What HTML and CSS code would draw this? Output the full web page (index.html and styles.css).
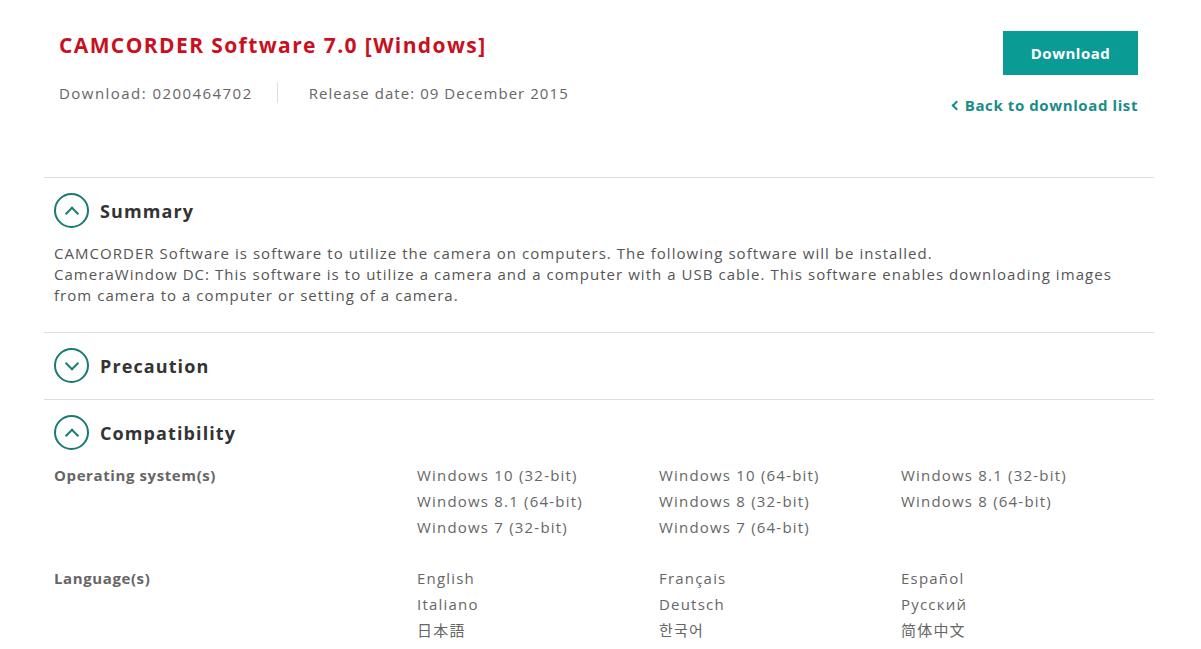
FILE: index.html
```html
<!DOCTYPE html>
<html lang="en">
<head>
    <meta charset="UTF-8">
    <title>CAMCORDER Software 7.0 [Windows]</title>
    <link rel="stylesheet" href="styles.css">
</head>
<body>
    <div class="page">
        <div class="head">
            <div class="head-info">
                <h1 class="title">CAMCORDER Software 7.0 [Windows]</h1>
                <div class="meta">
                    <span class="num">Download: 0200464702</span>
                    <span class="sep"></span>
                    <span>Release date: 09 December 2015</span>
                </div>
            </div>
            <div class="head-actions">
                <a class="btn" href="#">Download</a>
                <a class="back" href="#"><span class="back-arrow"></span>Back to download list</a>
            </div>
        </div>

        <!-- 概要 -->
        <div class="section">
            <div class="section-head">
                <span class="toggle up"></span>
                <h2>Summary</h2>
            </div>
            <p class="summary">CAMCORDER Software is software to utilize the camera on computers. The following software will be installed.<br>CameraWindow DC: This software is to utilize a camera and a computer with a USB cable. This software enables downloading images from camera to a computer or setting of a camera.</p>
        </div>

        <div class="section">
            <div class="section-head">
                <span class="toggle down"></span>
                <h2>Precaution</h2>
            </div>
        </div>

        <div class="section last">
            <div class="section-head">
                <span class="toggle up"></span>
                <h2>Compatibility</h2>
            </div>
            <div class="compat">
                <div class="compat-label">Operating system(s)</div>
                <ul class="compat-list">
                    <li>Windows 10 (32-bit)</li>
                    <li>Windows 10 (64-bit)</li>
                    <li>Windows 8.1 (32-bit)</li>
                    <li>Windows 8.1 (64-bit)</li>
                    <li>Windows 8 (32-bit)</li>
                    <li>Windows 8 (64-bit)</li>
                    <li>Windows 7 (32-bit)</li>
                    <li>Windows 7 (64-bit)</li>
                </ul>
            </div>
            <div class="compat">
                <div class="compat-label">Language(s)</div>
                <ul class="compat-list">
                    <li>English</li>
                    <li>Français</li>
                    <li>Español</li>
                    <li>Italiano</li>
                    <li>Deutsch</li>
                    <li>Русский</li>
                    <li lang="ja">日本語</li>
                    <li lang="ko">한국어</li>
                    <li lang="zh-CN">简体中文</li>
                </ul>
            </div>
        </div>
    </div>
</body>
</html>
```

FILE: styles.css
```css
*{
    padding: 0;
    margin: 0;
    box-sizing: border-box;
}
body{
    font-family: "Open Sans", "Noto Sans CJK JP", sans-serif;
    color: #555;
    background: #fff;
}
.page{
    width: 1110px;
    margin-left: 44px;
}
/* 顶部标题区 */
.head{
    display: flex;
    justify-content: space-between;
    padding: 31px 16px 0 15px;
    height: 178px;
    border-bottom: 1px solid #ddd;
}
.title{
    font-size: 21px;
    font-weight: 700;
    color: #c8101e;
    letter-spacing: 1.4px;
    line-height: 28px;
}
.meta{
    display: flex;
    align-items: center;
    margin-top: 23px;
    font-size: 15px;
    color: #666;
    letter-spacing: 1.05px;
}
.meta .num{
    letter-spacing: 1.45px;
}
.sep{
    width: 1px;
    height: 21px;
    background: #ddd;
    margin: 0 31px 0 24px;
}
.head-actions{
    display: flex;
    flex-direction: column;
    align-items: flex-end;
}
.btn{
    display: block;
    width: 135px;
    height: 44px;
    line-height: 44px;
    text-align: center;
    background: #0b9b95;
    color: #fff;
    font-size: 15px;
    font-weight: 700;
    text-decoration: none;
    letter-spacing: 0.5px;
}
.back{
    margin-top: 20px;
    color: #1a8c87;
    font-size: 15px;
    font-weight: 700;
    text-decoration: none;
    letter-spacing: 0.6px;
    display: flex;
    align-items: center;
}
.back-arrow{
    width: 7px;
    height: 7px;
    border-left: 2px solid #1a8c87;
    border-bottom: 2px solid #1a8c87;
    transform: rotate(45deg);
    margin-right: 5px;
}
/* 折叠区块 */
.section{
    border-bottom: 1px solid #ddd;
    padding: 15px 10px 16px;
}
.section.last{
    border-bottom: none;
}
.section-head{
    display: flex;
    align-items: center;
}
.section-head h2{
    font-size: 18px;
    font-weight: 700;
    color: #333;
    letter-spacing: 1.1px;
    margin-left: 11px;
}
.toggle{
    width: 35px;
    height: 35px;
    border: 2px solid #177b70;
    border-radius: 50%;
    position: relative;
}
.toggle::after{
    content: "";
    position: absolute;
    left: 50%;
    top: 50%;
    width: 8px;
    height: 8px;
    border-left: 2px solid #177b70;
    border-top: 2px solid #177b70;
}
.toggle.up::after{
    transform: translate(-50%, -25%) rotate(45deg);
}
.toggle.down::after{
    transform: translate(-50%, -75%) rotate(225deg);
}
.summary{
    margin-top: 15px;
    margin-bottom: 10px;
    font-size: 15px;
    line-height: 21px;
    letter-spacing: 1.04px;
    color: #555;
}
/* 兼容性表格 */
.compat{
    display: flex;
    margin-top: 12px;
    font-size: 15px;
    color: #666;
    letter-spacing: 1.2px;
}
.compat + .compat{
    margin-top: 25px;
}
.compat-label{
    width: 363px;
    font-weight: 700;
    line-height: 26px;
    letter-spacing: 0.6px;
}
.compat-list{
    list-style: none;
    display: grid;
    grid-template-columns: repeat(3, 242px);
    line-height: 26px;
}
```
